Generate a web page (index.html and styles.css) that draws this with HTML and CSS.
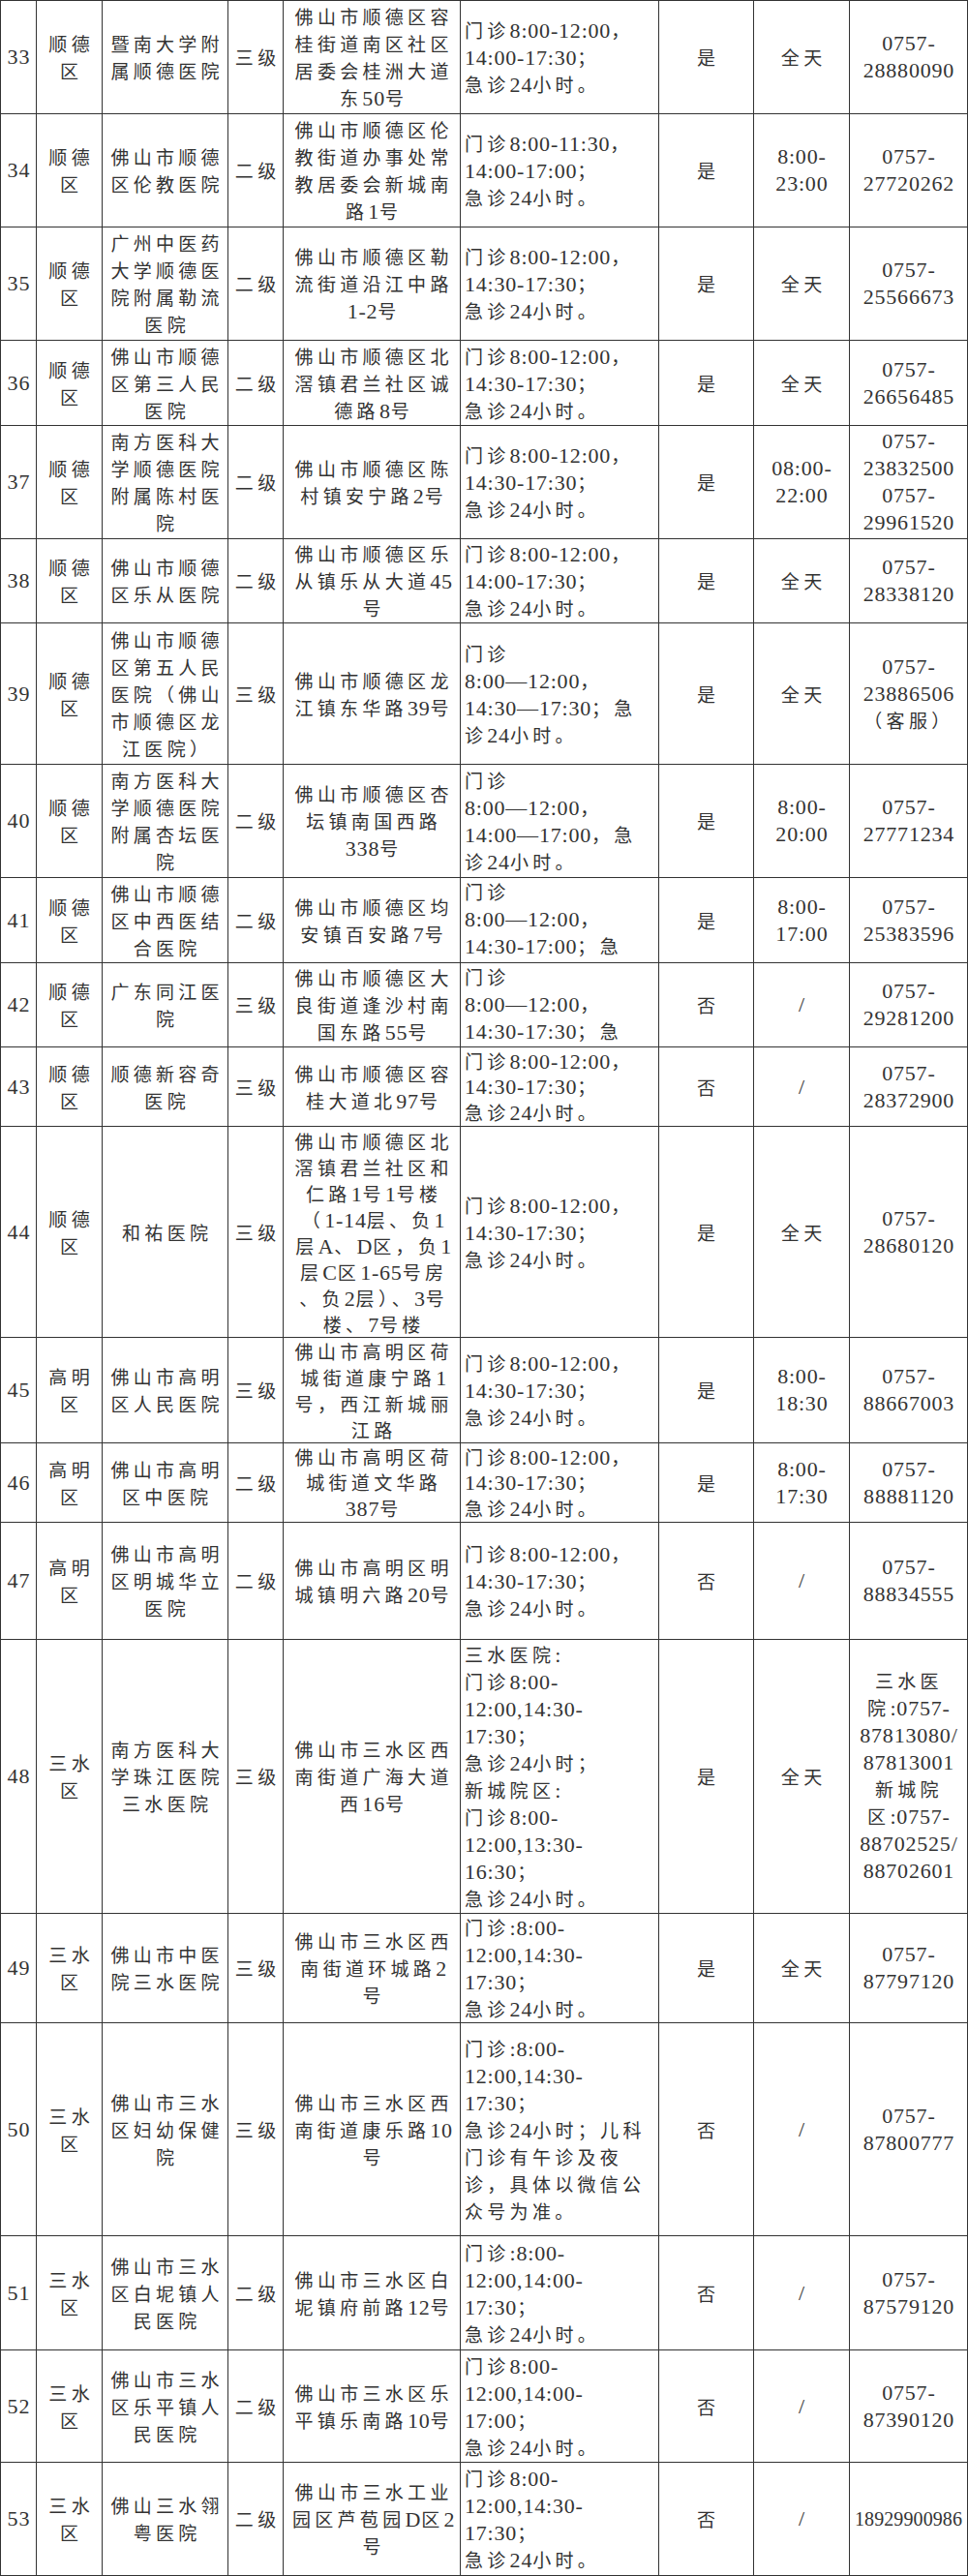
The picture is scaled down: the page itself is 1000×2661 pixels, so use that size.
FILE: index.html
```html
<!DOCTYPE html>
<html lang="zh-CN">
<head>
<meta charset="utf-8">
<title>佛山市医院门急诊信息</title>
<link rel="stylesheet" href="styles.css">
</head>
<body>
<div class="tbl">

<!-- 33 -->
<div class="cell num"><div class="in">33</div></div>
<div class="cell"><div class="in">顺德<br>区</div></div>
<div class="cell"><div class="in">暨南大学附<br>属顺德医院</div></div>
<div class="cell"><div class="in">三级</div></div>
<div class="cell"><div class="in">佛山市顺德区容<br>桂街道南区社区<br>居委会桂洲大道<br>东<span class="n">50</span>号</div></div>
<div class="cell hrs"><div class="in">门诊<span class="n">8:00-12:00</span>，<br><span class="n">14:00-17:30</span>；<br>急诊<span class="n">24</span>小时。</div></div>
<div class="cell"><div class="in">是</div></div>
<div class="cell"><div class="in">全天</div></div>
<div class="cell num"><div class="in">0757-<br>28880090</div></div>

<!-- 34 -->
<div class="cell num"><div class="in">34</div></div>
<div class="cell"><div class="in">顺德<br>区</div></div>
<div class="cell"><div class="in">佛山市顺德<br>区伦教医院</div></div>
<div class="cell"><div class="in">二级</div></div>
<div class="cell"><div class="in">佛山市顺德区伦<br>教街道办事处常<br>教居委会新城南<br>路<span class="n">1</span>号</div></div>
<div class="cell hrs"><div class="in">门诊<span class="n">8:00-11:30</span>，<br><span class="n">14:00-17:00</span>；<br>急诊<span class="n">24</span>小时。</div></div>
<div class="cell"><div class="in">是</div></div>
<div class="cell num"><div class="in">8:00-<br>23:00</div></div>
<div class="cell num"><div class="in">0757-<br>27720262</div></div>

<!-- 35 -->
<div class="cell num"><div class="in">35</div></div>
<div class="cell"><div class="in">顺德<br>区</div></div>
<div class="cell"><div class="in">广州中医药<br>大学顺德医<br>院附属勒流<br>医院</div></div>
<div class="cell"><div class="in">二级</div></div>
<div class="cell"><div class="in">佛山市顺德区勒<br>流街道沿江中路<br><span class="n">1-2</span>号</div></div>
<div class="cell hrs"><div class="in">门诊<span class="n">8:00-12:00</span>，<br><span class="n">14:30-17:30</span>；<br>急诊<span class="n">24</span>小时。</div></div>
<div class="cell"><div class="in">是</div></div>
<div class="cell"><div class="in">全天</div></div>
<div class="cell num"><div class="in">0757-<br>25566673</div></div>

<!-- 36 -->
<div class="cell num"><div class="in">36</div></div>
<div class="cell"><div class="in">顺德<br>区</div></div>
<div class="cell"><div class="in">佛山市顺德<br>区第三人民<br>医院</div></div>
<div class="cell"><div class="in">二级</div></div>
<div class="cell"><div class="in">佛山市顺德区北<br>滘镇君兰社区诚<br>德路<span class="n">8</span>号</div></div>
<div class="cell hrs"><div class="in">门诊<span class="n">8:00-12:00</span>，<br><span class="n">14:30-17:30</span>；<br>急诊<span class="n">24</span>小时。</div></div>
<div class="cell"><div class="in">是</div></div>
<div class="cell"><div class="in">全天</div></div>
<div class="cell num"><div class="in">0757-<br>26656485</div></div>

<!-- 37 -->
<div class="cell num"><div class="in">37</div></div>
<div class="cell"><div class="in">顺德<br>区</div></div>
<div class="cell"><div class="in">南方医科大<br>学顺德医院<br>附属陈村医<br>院</div></div>
<div class="cell"><div class="in">二级</div></div>
<div class="cell"><div class="in">佛山市顺德区陈<br>村镇安宁路<span class="n">2</span>号</div></div>
<div class="cell hrs"><div class="in">门诊<span class="n">8:00-12:00</span>，<br><span class="n">14:30-17:30</span>；<br>急诊<span class="n">24</span>小时。</div></div>
<div class="cell"><div class="in">是</div></div>
<div class="cell num"><div class="in">08:00-<br>22:00</div></div>
<div class="cell num"><div class="in">0757-<br>23832500<br>0757-<br>29961520</div></div>

<!-- 38 -->
<div class="cell num"><div class="in">38</div></div>
<div class="cell"><div class="in">顺德<br>区</div></div>
<div class="cell"><div class="in">佛山市顺德<br>区乐从医院</div></div>
<div class="cell"><div class="in">二级</div></div>
<div class="cell"><div class="in">佛山市顺德区乐<br>从镇乐从大道<span class="n">45</span><br>号</div></div>
<div class="cell hrs"><div class="in">门诊<span class="n">8:00-12:00</span>，<br><span class="n">14:00-17:30</span>；<br>急诊<span class="n">24</span>小时。</div></div>
<div class="cell"><div class="in">是</div></div>
<div class="cell"><div class="in">全天</div></div>
<div class="cell num"><div class="in">0757-<br>28338120</div></div>

<!-- 39 -->
<div class="cell num"><div class="in">39</div></div>
<div class="cell"><div class="in">顺德<br>区</div></div>
<div class="cell"><div class="in">佛山市顺德<br>区第五人民<br>医院（佛山<br>市顺德区龙<br>江医院）</div></div>
<div class="cell"><div class="in">三级</div></div>
<div class="cell"><div class="in">佛山市顺德区龙<br>江镇东华路<span class="n">39</span>号</div></div>
<div class="cell hrs"><div class="in">门诊<br><span class="n">8:00—12:00</span>，<br><span class="n">14:30—17:30</span>；急<br>诊<span class="n">24</span>小时。</div></div>
<div class="cell"><div class="in">是</div></div>
<div class="cell"><div class="in">全天</div></div>
<div class="cell num"><div class="in">0757-<br>23886506<br><span class="c">（客服）</span></div></div>

<!-- 40 -->
<div class="cell num"><div class="in">40</div></div>
<div class="cell"><div class="in">顺德<br>区</div></div>
<div class="cell"><div class="in">南方医科大<br>学顺德医院<br>附属杏坛医<br>院</div></div>
<div class="cell"><div class="in">二级</div></div>
<div class="cell"><div class="in">佛山市顺德区杏<br>坛镇南国西路<br><span class="n">338</span>号</div></div>
<div class="cell hrs"><div class="in">门诊<br><span class="n">8:00—12:00</span>，<br><span class="n">14:00—17:00</span>，急<br>诊<span class="n">24</span>小时。</div></div>
<div class="cell"><div class="in">是</div></div>
<div class="cell num"><div class="in">8:00-<br>20:00</div></div>
<div class="cell num"><div class="in">0757-<br>27771234</div></div>

<!-- 41 -->
<div class="cell num"><div class="in">41</div></div>
<div class="cell"><div class="in">顺德<br>区</div></div>
<div class="cell"><div class="in">佛山市顺德<br>区中西医结<br>合医院</div></div>
<div class="cell"><div class="in">二级</div></div>
<div class="cell"><div class="in">佛山市顺德区均<br>安镇百安路<span class="n">7</span>号</div></div>
<div class="cell hrs"><div class="in">门诊<br><span class="n">8:00—12:00</span>，<br><span class="n">14:30-17:00</span>；急<br>诊<span class="n">24</span>小时。</div></div>
<div class="cell"><div class="in">是</div></div>
<div class="cell num"><div class="in">8:00-<br>17:00</div></div>
<div class="cell num"><div class="in">0757-<br>25383596</div></div>

<!-- 42 -->
<div class="cell num"><div class="in">42</div></div>
<div class="cell"><div class="in">顺德<br>区</div></div>
<div class="cell"><div class="in">广东同江医<br>院</div></div>
<div class="cell"><div class="in">三级</div></div>
<div class="cell"><div class="in">佛山市顺德区大<br>良街道逢沙村南<br>国东路<span class="n">55</span>号</div></div>
<div class="cell hrs"><div class="in">门诊<br><span class="n">8:00—12:00</span>，<br><span class="n">14:30-17:30</span>；急<br>诊<span class="n">24</span>小时。</div></div>
<div class="cell"><div class="in">否</div></div>
<div class="cell num"><div class="in">/</div></div>
<div class="cell num"><div class="in">0757-<br>29281200</div></div>

<!-- 43 -->
<div class="cell num"><div class="in">43</div></div>
<div class="cell"><div class="in">顺德<br>区</div></div>
<div class="cell"><div class="in">顺德新容奇<br>医院</div></div>
<div class="cell"><div class="in">三级</div></div>
<div class="cell"><div class="in">佛山市顺德区容<br>桂大道北<span class="n">97</span>号</div></div>
<div class="cell hrs"><div class="in lh26">门诊<span class="n">8:00-12:00</span>，<br><span class="n">14:30-17:30</span>；<br>急诊<span class="n">24</span>小时。</div></div>
<div class="cell"><div class="in">否</div></div>
<div class="cell num"><div class="in">/</div></div>
<div class="cell num"><div class="in">0757-<br>28372900</div></div>

<!-- 44 -->
<div class="cell num"><div class="in">44</div></div>
<div class="cell"><div class="in">顺德<br>区</div></div>
<div class="cell"><div class="in">和祐医院</div></div>
<div class="cell"><div class="in">三级</div></div>
<div class="cell"><div class="in lh27">佛山市顺德区北<br>滘镇君兰社区和<br>仁路<span class="n">1</span>号<span class="n">1</span>号楼<br>（<span class="n">1-14</span>层、负<span class="n">1</span><br>层<span class="n">A</span>、<span class="n">D</span>区，负<span class="n">1</span><br>层<span class="n">C</span>区<span class="n">1-65</span>号房<br>、负<span class="n">2</span>层）、<span class="n">3</span>号<br>楼、<span class="n">7</span>号楼</div></div>
<div class="cell hrs"><div class="in">门诊<span class="n">8:00-12:00</span>，<br><span class="n">14:30-17:30</span>；<br>急诊<span class="n">24</span>小时。</div></div>
<div class="cell"><div class="in">是</div></div>
<div class="cell"><div class="in">全天</div></div>
<div class="cell num"><div class="in">0757-<br>28680120</div></div>

<!-- 45 -->
<div class="cell num"><div class="in">45</div></div>
<div class="cell"><div class="in">高明<br>区</div></div>
<div class="cell"><div class="in">佛山市高明<br>区人民医院</div></div>
<div class="cell"><div class="in">三级</div></div>
<div class="cell"><div class="in lh27">佛山市高明区荷<br>城街道康宁路<span class="n">1</span><br>号，西江新城丽<br>江路</div></div>
<div class="cell hrs"><div class="in">门诊<span class="n">8:00-12:00</span>，<br><span class="n">14:30-17:30</span>；<br>急诊<span class="n">24</span>小时。</div></div>
<div class="cell"><div class="in">是</div></div>
<div class="cell num"><div class="in">8:00-<br>18:30</div></div>
<div class="cell num"><div class="in">0757-<br>88667003</div></div>

<!-- 46 -->
<div class="cell num"><div class="in">46</div></div>
<div class="cell"><div class="in">高明<br>区</div></div>
<div class="cell"><div class="in">佛山市高明<br>区中医院</div></div>
<div class="cell"><div class="in">二级</div></div>
<div class="cell"><div class="in lh26">佛山市高明区荷<br>城街道文华路<br><span class="n">387</span>号</div></div>
<div class="cell hrs"><div class="in lh26">门诊<span class="n">8:00-12:00</span>，<br><span class="n">14:30-17:30</span>；<br>急诊<span class="n">24</span>小时。</div></div>
<div class="cell"><div class="in">是</div></div>
<div class="cell num"><div class="in">8:00-<br>17:30</div></div>
<div class="cell num"><div class="in">0757-<br>88881120</div></div>

<!-- 47 -->
<div class="cell num"><div class="in">47</div></div>
<div class="cell"><div class="in">高明<br>区</div></div>
<div class="cell"><div class="in">佛山市高明<br>区明城华立<br>医院</div></div>
<div class="cell"><div class="in">二级</div></div>
<div class="cell"><div class="in">佛山市高明区明<br>城镇明六路<span class="n">20</span>号</div></div>
<div class="cell hrs"><div class="in">门诊<span class="n">8:00-12:00</span>，<br><span class="n">14:30-17:30</span>；<br>急诊<span class="n">24</span>小时。</div></div>
<div class="cell"><div class="in">否</div></div>
<div class="cell num"><div class="in">/</div></div>
<div class="cell num"><div class="in">0757-<br>88834555</div></div>

<!-- 48 -->
<div class="cell num"><div class="in">48</div></div>
<div class="cell"><div class="in">三水<br>区</div></div>
<div class="cell"><div class="in">南方医科大<br>学珠江医院<br>三水医院</div></div>
<div class="cell"><div class="in">三级</div></div>
<div class="cell"><div class="in">佛山市三水区西<br>南街道广海大道<br>西<span class="n">16</span>号</div></div>
<div class="cell hrs"><div class="in">三水医院<span class="n">:</span><br>门诊<span class="n">8:00-</span><br><span class="n">12:00,14:30-</span><br><span class="n">17:30</span>；<br>急诊<span class="n">24</span>小时；<br>新城院区<span class="n">:</span><br>门诊<span class="n">8:00-</span><br><span class="n">12:00,13:30-</span><br><span class="n">16:30</span>；<br>急诊<span class="n">24</span>小时。</div></div>
<div class="cell"><div class="in">是</div></div>
<div class="cell"><div class="in">全天</div></div>
<div class="cell num"><div class="in"><span class="c">三水医</span><br><span class="c">院</span>:0757-<br>87813080/<br>87813001<br><span class="c">新城院</span><br><span class="c">区</span>:0757-<br>88702525/<br>88702601</div></div>

<!-- 49 -->
<div class="cell num"><div class="in">49</div></div>
<div class="cell"><div class="in">三水<br>区</div></div>
<div class="cell"><div class="in">佛山市中医<br>院三水医院</div></div>
<div class="cell"><div class="in">三级</div></div>
<div class="cell"><div class="in">佛山市三水区西<br>南街道环城路<span class="n">2</span><br>号</div></div>
<div class="cell hrs"><div class="in">门诊<span class="n">:8:00-</span><br><span class="n">12:00,14:30-</span><br><span class="n">17:30</span>；<br>急诊<span class="n">24</span>小时。</div></div>
<div class="cell"><div class="in">是</div></div>
<div class="cell"><div class="in">全天</div></div>
<div class="cell num"><div class="in">0757-<br>87797120</div></div>

<!-- 50 -->
<div class="cell num"><div class="in">50</div></div>
<div class="cell"><div class="in">三水<br>区</div></div>
<div class="cell"><div class="in">佛山市三水<br>区妇幼保健<br>院</div></div>
<div class="cell"><div class="in">三级</div></div>
<div class="cell"><div class="in">佛山市三水区西<br>南街道康乐路<span class="n">10</span><br>号</div></div>
<div class="cell hrs"><div class="in">门诊<span class="n">:8:00-</span><br><span class="n">12:00,14:30-</span><br><span class="n">17:30</span>；<br>急诊<span class="n">24</span>小时；儿科<br>门诊有午诊及夜<br>诊，具体以微信公<br>众号为准。</div></div>
<div class="cell"><div class="in">否</div></div>
<div class="cell num"><div class="in">/</div></div>
<div class="cell num"><div class="in">0757-<br>87800777</div></div>

<!-- 51 -->
<div class="cell num"><div class="in">51</div></div>
<div class="cell"><div class="in">三水<br>区</div></div>
<div class="cell"><div class="in">佛山市三水<br>区白坭镇人<br>民医院</div></div>
<div class="cell"><div class="in">二级</div></div>
<div class="cell"><div class="in">佛山市三水区白<br>坭镇府前路<span class="n">12</span>号</div></div>
<div class="cell hrs"><div class="in">门诊<span class="n">:8:00-</span><br><span class="n">12:00,14:00-</span><br><span class="n">17:30</span>；<br>急诊<span class="n">24</span>小时。</div></div>
<div class="cell"><div class="in">否</div></div>
<div class="cell num"><div class="in">/</div></div>
<div class="cell num"><div class="in">0757-<br>87579120</div></div>

<!-- 52 -->
<div class="cell num"><div class="in">52</div></div>
<div class="cell"><div class="in">三水<br>区</div></div>
<div class="cell"><div class="in">佛山市三水<br>区乐平镇人<br>民医院</div></div>
<div class="cell"><div class="in">二级</div></div>
<div class="cell"><div class="in">佛山市三水区乐<br>平镇乐南路<span class="n">10</span>号</div></div>
<div class="cell hrs"><div class="in">门诊<span class="n">8:00-</span><br><span class="n">12:00,14:00-</span><br><span class="n">17:00</span>；<br>急诊<span class="n">24</span>小时。</div></div>
<div class="cell"><div class="in">否</div></div>
<div class="cell num"><div class="in">/</div></div>
<div class="cell num"><div class="in">0757-<br>87390120</div></div>

<!-- 53 -->
<div class="cell num"><div class="in">53</div></div>
<div class="cell"><div class="in">三水<br>区</div></div>
<div class="cell"><div class="in">佛山三水翎<br>粤医院</div></div>
<div class="cell"><div class="in">二级</div></div>
<div class="cell"><div class="in">佛山市三水工业<br>园区芦苞园<span class="n">D</span>区<span class="n">2</span><br>号</div></div>
<div class="cell hrs"><div class="in">门诊<span class="n">8:00-</span><br><span class="n">12:00,14:30-</span><br><span class="n">17:30</span>；<br>急诊<span class="n">24</span>小时。</div></div>
<div class="cell"><div class="in">否</div></div>
<div class="cell num"><div class="in">/</div></div>
<div class="cell num"><div class="in sm">18929900986</div></div>

</div>
</body>
</html>
```

FILE: styles.css
```css
html, body {
  margin: 0;
  padding: 0;
  background: #fff;
}

.tbl {
  display: grid;
  width: 1000px;
  box-sizing: border-box;
  border-left: 1px solid #333;
  border-top: 1px solid #333;
  grid-template-columns: 37px 68px 130px 57px 183px 205px 98px 99px 122px;
  grid-template-rows:
    117px 117px 117px 88px 117px 87px 146px 117px 88px 87px
    82px 218px 109px 82px 121px 283px 113px 220px 118px 116px 117px;
}

.cell {
  box-sizing: border-box;
  border-right: 1px solid #333;
  border-bottom: 1px solid #333;
  display: flex;
  align-items: center;
  align-items: safe center;
  justify-content: center;
  justify-content: safe center;
  overflow: hidden;
  min-width: 0;
  min-height: 0;
}

.in {
  font-family: "Noto Sans CJK SC", sans-serif;
  font-size: 19px;
  line-height: 28px;
  letter-spacing: 4.3px;
  padding-left: 4.3px;
  color: #333;
  white-space: nowrap;
  text-align: center;
}

.n {
  font-family: "Liberation Serif", "Noto Sans CJK SC", serif;
  font-size: 22px;
  letter-spacing: 0.8px;
  line-height: 0;
}

.num .in {
  font-family: "Liberation Serif", "Noto Sans CJK SC", serif;
  font-size: 22px;
  letter-spacing: 0.8px;
  padding-left: 0.8px;
}

.c {
  font-family: "Noto Sans CJK SC", sans-serif;
  font-size: 19px;
  letter-spacing: 4.3px;
  line-height: 0;
}

.hrs {
  justify-content: flex-start;
}

.hrs .in {
  text-align: left;
  padding-left: 4px;
}

.in.lh26 {
  line-height: 26.5px;
}

.in.lh27 {
  line-height: 27px;
}

.num .in.sm {
  font-size: 20px;
  letter-spacing: 0.1px;
  padding-left: 0;
}
```
